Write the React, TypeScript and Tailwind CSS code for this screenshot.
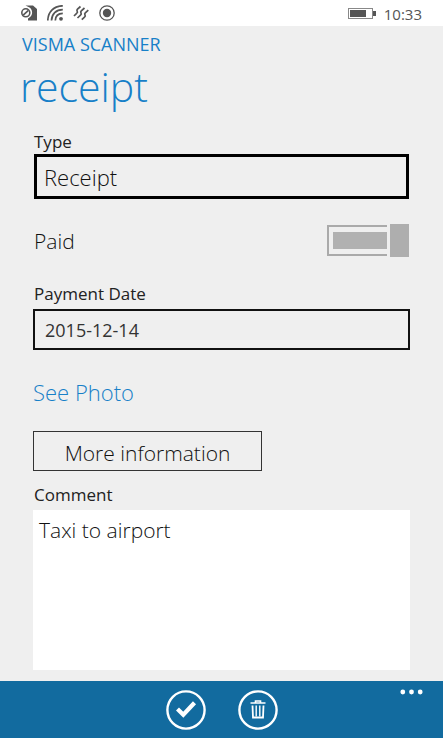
import { useState } from "react";

const labelClass = "block px-px text-[17px] leading-6 font-normal text-[#222]";

function StatusBar() {
  return (
    <div className="flex h-[26px] items-center justify-between bg-white px-[21px] text-[#555]">
      <div className="flex items-center gap-[10px]">
        {/* sim blocked */}
        <svg className="h-4 w-4" viewBox="0 0 16 16" fill="none">
          <path d="M4.500 0.500H12l4 3.500V15.500H7v-2A6.400 6.400 0 0 0 9 2.800Z" fill="currentColor" />
          <circle cx="4.800" cy="7.800" r="4" stroke="currentColor" strokeWidth="1.600" />
          <path d="M2.200 10.200 7.400 5.400" stroke="currentColor" strokeWidth="1.600" />
        </svg>
        {/* wifi */}
        <svg className="h-4 w-4" viewBox="0 0 16 16" fill="none" stroke="currentColor" strokeWidth="1.700">
          <path d="M0.800 15.500C1 7 7 0.800 15.800 0.800" />
          <path d="M4.500 15.500C4.700 9 9 4.600 15.800 4.600" />
          <path d="M8.300 15.500C8.500 11 11 8.500 15.800 8.400" />
          <circle cx="14" cy="13.800" r="1.900" fill="currentColor" stroke="none" />
        </svg>
        {/* vibrate */}
        <svg className="h-4 w-4" viewBox="0 0 16 16" fill="none" stroke="currentColor" strokeWidth="1.700">
          <path d="M7.500 1.500 4.500 4.200Q3.500 5.200 4.200 6.300T3.600 8.400L1 11" />
          <path d="M11.500 3 8.300 5.800Q7.300 6.800 8 8T7.500 10.200L4.500 13" />
          <path d="M15.300 5.200 12.300 7.800Q11.300 8.800 12 10T11.500 12.200L8.800 14.700" />
        </svg>
        {/* location */}
        <svg className="h-4 w-4" viewBox="0 0 16 16" fill="none">
          <circle cx="8" cy="8" r="7.200" stroke="currentColor" strokeWidth="1.300" />
          <circle cx="8" cy="8" r="4.200" fill="currentColor" />
        </svg>
      </div>
      <div className="flex items-center gap-2">
        <svg className="h-3 w-7" viewBox="0 0 28 12" fill="none">
          <rect x="0.500" y="1.500" width="24" height="10" stroke="#888" />
          <rect x="2" y="3" width="16" height="7" fill="#555" />
          <rect x="25" y="4" width="3" height="5" fill="#555" />
        </svg>
        <span className="pt-px text-[15px] leading-6 font-normal">10:33</span>
      </div>
    </div>
  );
}

export default function App() {
  const [paid, setPaid] = useState(true);

  return (
    <div className="flex min-h-screen flex-col bg-[#efefef] font-['Open_Sans','Noto_Sans',sans-serif] font-[350]">
      <StatusBar />

      <header className="px-[22px] pt-[6px] text-[#1780c8]">
        <p className="text-lg leading-6 font-normal">VISMA SCANNER</p>
        <h1 className="-ml-0.5 text-[41px] leading-[60px]">receipt</h1>
      </header>

      <main className="flex flex-1 flex-col px-[33px] pb-[11px] pt-[14px] text-[#111]">
        <label htmlFor="type" className={labelClass}>Type</label>
        <div className="px-px">
          <select
            id="type"
            className="block h-[45px] w-full appearance-none rounded-none border-[3px] border-black bg-transparent px-[7px] pt-[2px] text-[22px] text-[#111]"
          >
            <option>Receipt</option>
          </select>
        </div>

        <label className="mt-[25px] flex h-[33px] items-center justify-between px-px">
          <span className="pt-[2px] text-[21px]">Paid</span>
          <input
            type="checkbox"
            role="switch"
            className="peer sr-only"
            checked={paid}
            onChange={(e) => setPaid(e.target.checked)}
          />
          <span className="flex h-[33px] items-center gap-[3px] peer-not-checked:flex-row-reverse">
            <span className="h-[31px] w-[60px] border-2 border-r-0 border-[#aaa] py-[5px] pl-1">
              <span className="block h-full bg-[#b1b1b1]" />
            </span>
            <span className="h-[33px] w-[19px] bg-[#aeaeae]" />
          </span>
        </label>

        <label htmlFor="date" className={`mt-[25px] ${labelClass}`}>Payment Date</label>
        <input
          id="date"
          type="text"
          defaultValue="2015-12-14"
          className="mt-[3px] h-[41px] w-full border-2 border-[#111] bg-transparent px-[10px] text-lg font-normal text-[#333]"
        />

        <a href="#photo" className="mt-[27px] self-start text-[22px] leading-[30px] text-[#1780c8]">
          See Photo
        </a>

        <button type="button" className="mt-6 h-10 w-[229px] border border-[#333] pt-[3px] text-[21px] leading-[30px]">
          More information
        </button>

        <label htmlFor="comment" className={`mt-3 ${labelClass}`}>Comment</label>
        <textarea
          id="comment"
          defaultValue="Taxi to airport"
          className="mt-[3px] min-h-32 w-full flex-1 resize-none bg-white px-[6px] py-[5px] text-[21px] leading-[30px]"
        />
      </main>

      <footer className="grid h-[57px] grid-cols-[1fr_auto_1fr] bg-[#126b9f] text-white">
        <span />
        <div className="flex items-center gap-8">
          <button type="button" aria-label="Save">
            <svg className="h-10 w-10" viewBox="0 0 40 40" fill="none" stroke="currentColor">
              <circle cx="20" cy="20" r="18.600" strokeWidth="2.400" />
              <path d="M11.500 19 17.300 24.800 28.500 12.800" strokeWidth="4.200" />
            </svg>
          </button>
          <button type="button" aria-label="Delete">
            <svg className="h-10 w-10" viewBox="0 0 40 40" fill="none" stroke="currentColor">
              <circle cx="20" cy="20" r="18.600" strokeWidth="2.400" />
              <path d="M12.500 13h15M17.500 12.500V11h5v1.500" strokeWidth="1.600" />
              <path d="M14.500 15.500 15 27.500h10l.5-12" strokeWidth="1.800" />
              <path d="M18.200 15.500v11M21.800 15.500v11" strokeWidth="1.400" />
            </svg>
          </button>
        </div>
        <button type="button" aria-label="More options" className="mr-5 mt-[7px] self-start justify-self-end">
          <svg className="block h-2 w-[23px]" viewBox="0 0 23 8" fill="currentColor">
            <circle cx="2.800" cy="4" r="2.400" />
            <circle cx="11.500" cy="4" r="2.400" />
            <circle cx="20.200" cy="4" r="2.400" />
          </svg>
        </button>
      </footer>
    </div>
  );
}
